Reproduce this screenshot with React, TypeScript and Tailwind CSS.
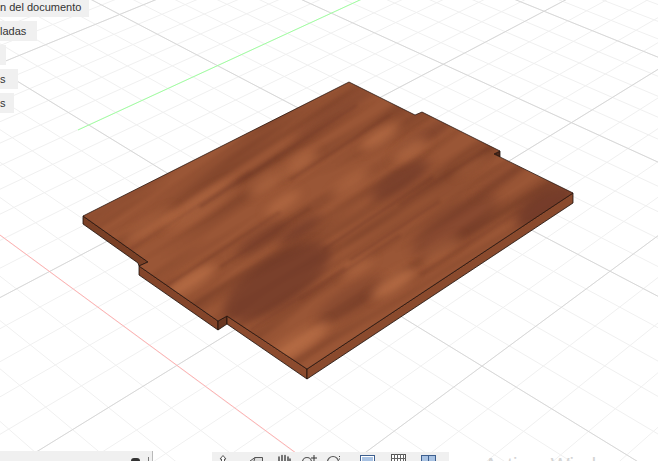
import React from "react";

// Projective grid: family A lines meet at vpA, family B lines meet at vpB
const vpA = [1983, -746];
const vpB = [-1327, -743];

const redAt = (i: number) => {
  const x = (-58 + 20.73 * i) / (1 - 0.01562 * i);
  return [x, 235 + 0.737 * x];
};
const greenAt = (j: number) => {
  const x = (-58 + 30.6 * j) / (1 + 0.01393 * j);
  return [x, 165.9 - 0.46 * x];
};

// Extends the line through p and a vanishing point across the whole view
const lineThrough = (p: number[], vp: number[]) => {
  const dx = vp[0] - p[0];
  const dy = vp[1] - p[1];
  const far = 4;
  return {
    x1: p[0] - dx * far,
    y1: p[1] - dy * far,
    x2: p[0] + dx * far,
    y2: p[1] + dy * far,
  };
};

const range = (from: number, to: number) => Array.from({ length: to - from + 1 }, (_, n) => from + n);

const topFace = "349,82 415,115 422,112 500,151 494,154 573,193 307,369 227,316 218,321 139,266 148,262 83,216";

const darkBlobs = [
  [300, 230, 26, 5, 0.75],
  [262, 238, 30, 9, 0.4],
  [277, 282, 62, 24, 0.6],
  [400, 180, 34, 10, 0.6],
  [545, 205, 34, 14, 0.7],
  [335, 112, 50, 7, 0.35],
  [425, 136, 36, 6, 0.4],
  [350, 300, 40, 12, 0.3],
  [455, 225, 50, 18, 0.35],
  [500, 180, 30, 6, 0.25],
];

const lightBlobs = [
  [300, 163, 20, 7, 0.6],
  [267, 183, 22, 7, 0.55],
  [283, 203, 20, 6, 0.55],
  [380, 137, 22, 7, 0.65],
  [410, 150, 20, 7, 0.6],
  [350, 183, 22, 6, 0.5],
  [393, 283, 26, 8, 0.7],
  [357, 267, 18, 6, 0.5],
  [200, 205, 44, 9, 0.45],
  [150, 225, 30, 8, 0.4],
  [190, 282, 30, 8, 0.65],
  [295, 345, 40, 9, 0.7],
  [440, 250, 24, 7, 0.45],
  [470, 165, 20, 5, 0.3],
];

const streaks = [
  [200, 207, 277, 157, 0.4],
  [277, 157, 357, 105, 0.35],
  [323, 250, 433, 177, 0.45],
  [220, 267, 310, 208, 0.35],
  [350, 260, 440, 201, 0.35],
  [130, 250, 250, 172, 0.25],
  [160, 290, 280, 212, 0.3],
  [250, 330, 345, 268, 0.3],
  [400, 205, 490, 147, 0.3],
  [290, 180, 390, 115, 0.3],
  [420, 275, 520, 210, 0.25],
  [300, 300, 400, 235, 0.3],
];

function Viewport() {
  return (
    <svg className="absolute inset-0" width={658} height={461} viewBox="0 0 658 461">
      <defs>
        <clipPath id="board">
          <polygon points={topFace} />
        </clipPath>
        <filter id="soft" x="-40%" y="-120%" width="180%" height="340%" colorInterpolationFilters="sRGB">
          <feGaussianBlur stdDeviation="6 4" />
        </filter>
        <filter id="fine" x="-10%" y="-10%" width="120%" height="120%" colorInterpolationFilters="sRGB">
          <feGaussianBlur stdDeviation="1.4" />
        </filter>
        <filter id="grain" x="0" y="0" width="100%" height="100%" colorInterpolationFilters="sRGB">
          <feTurbulence type="fractalNoise" baseFrequency="0.005 0.07" numOctaves={2} seed={11} />
          <feColorMatrix type="matrix" values="0 0 0 0 0.36  0 0 0 0 0.17  0 0 0 0 0.11  2.2 0 0 0 -0.9" />
          <feGaussianBlur stdDeviation="3 1" />
        </filter>
      </defs>

      {range(-10, 34).map((i) => (
        <line key={`a${i}`} {...lineThrough(redAt(i), vpA)} stroke="#f0f0f0" strokeWidth={1} />
      ))}
      {range(-6, 26).map((j) => (
        <line key={`b${j}`} {...lineThrough(greenAt(j), vpB)} stroke="#f0f0f0" strokeWidth={1} />
      ))}
      {[-5, 5, 10, 15, 20, 25, 30].map((i) => (
        <line key={`ma${i}`} {...lineThrough(redAt(i), vpA)} stroke="#d8d8d8" strokeWidth={1} />
      ))}
      {[5, 10, 15, 20, 25].map((j) => (
        <line key={`mb${j}`} {...lineThrough(greenAt(j), vpB)} stroke="#d8d8d8" strokeWidth={1} />
      ))}
      <line x1={78} y1={130} x2={362} y2={-1} stroke="#a0ffa0" strokeWidth={1} />
      <line x1={0} y1={235} x2={296} y2={453} stroke="#ffb0b0" strokeWidth={1} />

      {/* side faces */}
      <g stroke="#1c0f0a" strokeWidth={0.8} strokeLinejoin="round">
        <polygon points="83,216 148,262 139,266 138,263 83,224" fill="#7a4026" />
        <polygon points="139,266 218,321 218,330 139,275" fill="#84452a" />
        <polygon points="218,321 227,316 227,324 218,330" fill="#6a3823" />
        <polygon points="227,316 307,369 307,379 227,324" fill="#8c4b2e" />
        <polygon points="307,369 573,193 573,203 307,379" fill="#8a4a2d" />
        <polygon points="500,151 500,157 494,154" fill="#4d281a" />
      </g>

      {/* top face, wood */}
      <polygon points={topFace} fill="#9a5636" />
      <g clipPath="url(#board)">
        <g transform="rotate(-33 330 225)">
          <rect x={0} y={0} width={660} height={450} filter="url(#grain)" opacity={0.42} />
        </g>
        {darkBlobs.map(([x, y, rx, ry, o], n) => (
          <ellipse
            key={`d${n}`}
            cx={x}
            cy={y}
            rx={rx}
            ry={ry}
            fill="#673325"
            opacity={o}
            filter="url(#soft)"
            transform={`rotate(-33 ${x} ${y})`}
          />
        ))}
        {lightBlobs.map(([x, y, rx, ry, o], n) => (
          <ellipse
            key={`l${n}`}
            cx={x}
            cy={y}
            rx={rx}
            ry={ry}
            fill="#c0744a"
            opacity={o}
            filter="url(#soft)"
            transform={`rotate(-33 ${x} ${y})`}
          />
        ))}
        {streaks.map(([x1, y1, x2, y2, o], n) => (
          <line
            key={`s${n}`}
            x1={x1}
            y1={y1}
            x2={x2}
            y2={y2}
            stroke="#6b3526"
            strokeWidth={3}
            opacity={o}
            filter="url(#fine)"
          />
        ))}
      </g>
      <polygon points={topFace} fill="none" stroke="#1c0f0a" strokeWidth={0.7} />
    </svg>
  );
}

function Chip({ label, className }: { label: string; className: string }) {
  return (
    <div className={`flex items-center whitespace-nowrap bg-[#f0f0f0] text-[11px] leading-none text-[#333] ${className}`}>
      {label}
    </div>
  );
}

const toolStroke = "#555";

function ToolIcon({ className, children }: { className: string; children: React.ReactNode }) {
  return (
    <svg className={`shrink-0 ${className}`} width={16} height={16} viewBox="0 0 16 16" fill="none">
      {children}
    </svg>
  );
}

export default function App() {
  return (
    <div className="relative h-[461px] w-[658px] overflow-hidden bg-white font-['Liberation_Sans',sans-serif]">
      <Viewport />

      {/* cut-off browser panel on the left */}
      <div className="absolute left-0 top-0 flex flex-col items-start">
        <Chip label="n del documento" className="h-[17px] w-[89px] pb-[2px]" />
        <Chip label="ladas" className="mt-[4px] h-[20px] w-[37px]" />
        <Chip label="" className="mt-[4px] h-[20px] w-[6px]" />
        <Chip label="s" className="mt-[4px] h-[20px] w-[18px]" />
        <Chip label="s" className="mt-[4px] h-[20px] w-[14px]" />
      </div>

      {/* cut-off comments panel */}
      <div className="absolute bottom-0 left-0 flex h-[10px] w-[153px] border-r border-[#b9b9b9] bg-[#f0f0f0]">
        <div className="ml-[131px] mt-[7px] h-[6px] w-[9px] rounded-full bg-[#333]" />
        <div className="ml-[8px] mt-[6px] h-[6px] w-px bg-[#777]" />
      </div>

      {/* cut-off navigation toolbar */}
      <div className="absolute bottom-0 left-[212px] flex h-[9px] w-[237px] bg-[#f0f0f0] pl-[3px] pt-[2px]">
        <ToolIcon className="">
          <path d="M8 1.5 5 5h1.5v5h3V5H11z" stroke={toolStroke} fill="#fff" />
        </ToolIcon>
        <ToolIcon className="ml-[17px]">
          <path d="M2 7 7 3.5h7.5V9M7 3.5 6 7M2 7v5" stroke={toolStroke} fill="#ddd" />
        </ToolIcon>
        <ToolIcon className="ml-[12px]">
          <path d="M3 3v7M6 1.5V9M9 1.5V9M12 3v7M14 5v6" stroke={toolStroke} strokeWidth={1.6} strokeLinecap="round" />
        </ToolIcon>
        <ToolIcon className="ml-[9px]">
          <circle cx={6} cy={8} r={4.5} stroke={toolStroke} strokeWidth={1.2} />
          <path d="M13 1v6M10 4h6" stroke="#333" />
        </ToolIcon>
        <ToolIcon className="ml-[9px]">
          <circle cx={7} cy={8} r={5.5} stroke={toolStroke} strokeWidth={1.2} />
          <path d="M13 2.5h1M13 5h1" stroke="#333" />
        </ToolIcon>
        <ToolIcon className="ml-[18px]">
          <rect x={0.5} y={1.5} width={14} height={12} stroke="#3d5f8f" fill="#fff" />
          <rect x={2} y={3} width={11} height={9} fill="#a9c3e4" />
        </ToolIcon>
        <ToolIcon className="ml-[15px]">
          <rect x={0.5} y={0.5} width={14} height={12} stroke="#555" fill="#fff" />
          <path d="M3.5 0v12M6.5 0v12M9.5 0v12M12.5 0v12M0 4.5h15" stroke="#666" />
        </ToolIcon>
        <ToolIcon className="ml-[14px]">
          <rect x={0.5} y={1.5} width={14} height={12} stroke="#3d5f8f" fill="#a9c3e4" />
          <path d="M7.5 1v13" stroke="#3d5f8f" />
        </ToolIcon>
      </div>

      <div className="absolute left-[484px] top-[455px] whitespace-nowrap text-[20px] leading-none text-[#d4d4d4]">Activar Windows</div>
    </div>
  );
}
